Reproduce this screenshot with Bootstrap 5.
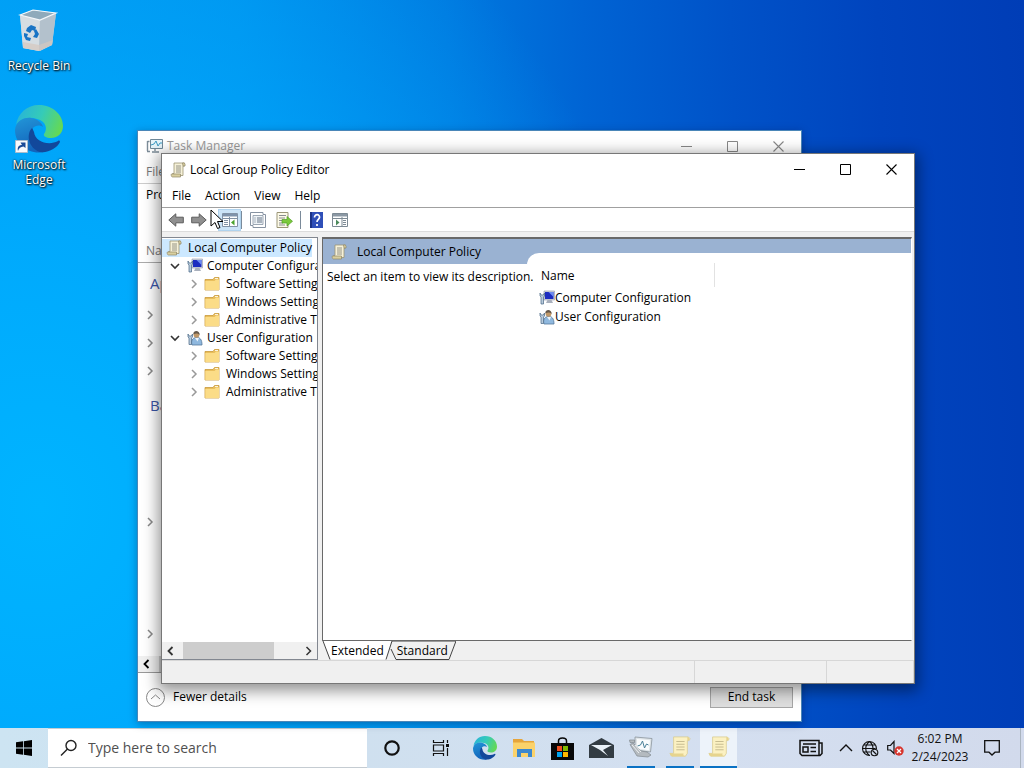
<!DOCTYPE html>
<html lang="en">
<head>
<meta charset="utf-8">
<meta name="viewport" content="width=device-width, initial-scale=1">
<title>Local Group Policy Editor</title>
<link href="https://cdn.jsdelivr.net/npm/bootstrap@5.3.0/dist/css/bootstrap.min.css" rel="stylesheet">
<style>
body{font-family:"Open Sans","Noto Sans",sans-serif;font-size:12px;line-height:18px;color:#000;overflow:hidden;
 background:radial-gradient(ellipse 62% 95% at 4% 66%,#00b4ff 0,rgba(0,172,254,.9) 35%,rgba(0,150,245,0) 100%),linear-gradient(88deg,#0098f0 0%,#0090ec 25%,#007ae0 45%,#0064d4 58%,#0052c8 72%,#0044be 86%,#003db6 100%)}
button{font:inherit;color:inherit;background:none;border:0;padding:0}
a{color:inherit;text-decoration:none}
svg{display:block;flex:none}
.desk-icon{width:78px;color:#fff;line-height:15px;text-shadow:1px 1px 2px #000,0 0 2px #000}
.win{position:absolute;background:#fff}
.taskman{left:137px;top:130px;right:222px;bottom:6px;border:1px solid #4a86b8;box-shadow:0 2px 8px rgba(0,20,60,.35)}
.gpedit{left:161px;top:153px;right:109px;bottom:44px;border:1px solid #777;box-shadow:0 4px 14px 3px rgba(0,0,0,.42)}
.capbtn{width:46px;height:29px;display:flex;align-items:center;justify-content:center}
.tm-title{height:30px;color:#999}
.tm-title .capbtn{color:#888}
.tm-menu{height:23px;color:#777;border-bottom:1px solid #ccc}
.tm-tabs{height:22px}
.tm-head{height:57px;border-bottom:1px solid #aaa;color:#777;padding-bottom:2px}
.tm-group{font-size:15px;color:#3a55a8;line-height:20px;font-weight:400;margin:0;padding:10px 0 8px 4px}
.tm-row{height:28px;color:#888}
.tm-gap{height:108px}
.tm-scroll{height:17px;background:#f0f0f0;border-bottom:1px solid #999}
.tm-thumb{background:#cdcdcd;width:300px}
.tm-foot{height:48px}
.endtask{width:83px;height:21px;background:#dedede;border:1px solid #a6a6a6;line-height:18px}
.gp-title{height:31px}
.gp-menu{height:23px;border-bottom:1px solid #a0a0a0;gap:14px;padding-left:10px}
.gp-tools{height:24px;border-bottom:1px solid #dcdcdc;padding-left:2px}
.toolbtn{width:23px;height:22px;display:flex;align-items:center;justify-content:center;flex:none}
.toolbtn.on{background:#cce4f7;border:1px solid #b0d3ee}
.toolsep{width:1px;height:18px;background:#7a8a9a}
.gp-main{background:#f0f0f0;padding:5px 2px 0 0;min-height:0}
.tree{width:156px;border:1px solid #828790;border-left:0;background:#fff;overflow:hidden}
.tree ul{list-style:none;margin:0;padding:0}
.tree>ul{padding-top:1px}
.tree li>div{height:18px;display:flex;align-items:center;white-space:nowrap}
.tree .chosen{background:#cce8ff;width:150px;gap:6px}
.tree li>.leaf{padding-left:23px}
.leaf .folder{margin:0 6px 0 2px}
.tw{width:17px;display:flex;justify-content:center;flex:none;color:#999}
.hscroll{height:17px;background:#f0f0f0;color:#333}
.hthumb{width:91px;background:#cdcdcd}
.scope{border:1px solid #696969;border-width:2px 1px 1px;border-right-color:#fff;background:#fff;min-height:0}
.blue{background:#9ab2d2}
.desc{width:204px}
.desc-head{height:25px}
.desc-head svg{margin-right:10px}
.results{padding-top:14px}
.results-in{background:#fff;border-top-left-radius:12px;padding:10px 0 0 7px}
.namecol{width:181px;height:24px;border-right:1px solid #e2e2e2;padding:4px 7px;margin-bottom:1px}
.item{height:19px;line-height:19px;padding-left:5px}
.tabstrip{height:19px}
.tab-a{padding-left:9px}
.tab-b{padding-left:13px}
.status{height:23px;background:#f0f0f0;border-top:1px solid #d7d7d7}
.status div{border-right:1px solid #d7d7d7}
.s1{width:132px}
.s2{width:87px}
.pointer{position:absolute;left:48px;top:55px}
.bar{height:40px;background:linear-gradient(90deg,#cde4f2,#cfe0ef 35%,#d4dff0 70%,#d2daec);color:#111}
.startbtn{width:48px}
.searchbox{width:319px;background:#fff;border:solid #c5ccd2;border-width:1px 0;padding-left:12px;gap:10px}
.searchbox input{border:0;background:none;font-size:14px;outline:0;padding:0;min-width:0}
.searchbox input::placeholder{color:#505050;opacity:1}
.task{width:39px;height:40px;display:flex;align-items:center;justify-content:center;flex:none}
.task.wide{width:49px}
.task.open span{border-bottom:2px solid #0a72c4;height:40px;width:28px;display:flex;align-items:center;justify-content:center}
.task.open.now span{width:37px;background:#edf3fa}
.clock{width:72px;text-align:center;font-size:12px}
.peek{width:4px;border-left:1px solid #aab4c0}
</style>
</head>
<body class="vh-100 d-flex flex-column">
<svg width="0" height="0" class="position-absolute" aria-hidden="true">
 <defs>
  <linearGradient id="gTop" x1="0" y1=".3" x2="1" y2=".6"><stop offset="0" stop-color="#28b4d8"/><stop offset=".5" stop-color="#35cbb8"/><stop offset="1" stop-color="#66d952"/></linearGradient>
  <linearGradient id="gMid" x1="0" y1="0" x2=".3" y2="1"><stop offset="0" stop-color="#2296d8"/><stop offset="1" stop-color="#1364bb"/></linearGradient>
 </defs>
 <symbol id="edge" viewBox="0 0 48 48">
  <path fill="url(#gTop)" d="M1 20C3 8 12 0 24 0c14 0 24 10 24 21 0 8-6 12-12 12-5 0-8-2-7-4 4-5 2-13-7-15C13 11 5 14 1 20z"/>
  <path fill="url(#gMid)" d="M0 25C1 16 9 12 16 13c7 1 11 5 12 9-5-4-13 0-13 9 0 9 7 15 14 16C14 50 0 40 0 25z"/>
  <path fill="#12489b" d="M17 23c-6 6-4 20 8 24 9 1 17-4 20-10 0-1-1-2-2-1-9 5-23 1-24-9-1-2-1-3-2-4z"/>
 </symbol>
 <symbol id="scroll" viewBox="0 0 16 16">
  <path d="M4 1h10.500v3H13v9.500H2.500v-2H4z" fill="#f6f1d8" stroke="#9c9474" stroke-width=".8"/>
  <path d="M12.500 1c2-.6 3 .8 2.500 3H13zM1.500 12h9v3H2.500c-1.500 0-1.500-3-1-3z" fill="#d9cf9f" stroke="#8f8768" stroke-width=".7"/>
  <path d="M6 4h5M6 6h5M6 8h5M6 10h5" stroke="#8a8a80" stroke-width=".9"/>
 </symbol>
 <symbol id="bigscroll" viewBox="0 0 24 24">
  <path d="M5 1h16l2 2-1 2h-2v14l-2 3H3l-2-3h4z" fill="#fbf1c2" stroke="#d9c98a" stroke-width=".8"/>
  <path d="M20 1c3 0 3 4 0 4zM1 19h15c-1 2 0 3 2 3H4c-3 0-3-3-3-3z" fill="#e6d48e"/>
  <path d="M8 6h9M8 9h9M8 12h9M8 15h9" stroke="#c3b88c" stroke-width="1"/>
 </symbol>
 <symbol id="folder" viewBox="0 0 16 16">
  <path d="M1 3.500h8L10.500 1.500H15V14H1z" fill="#e9be5c" stroke="#c99a3c" stroke-width=".8"/><path d="M1.300 5h9.200l1.500-1.500h3V14H1.300z" fill="#fbdc87"/><path d="M11 2.500h3" stroke="#fff" stroke-width=".8"/>
 </symbol>
 <symbol id="comp" viewBox="0 0 16 16">
  <path d="M5 1h10.500v9H5z" fill="#d4d8e0" stroke="#8d96a8" stroke-width=".6"/><path d="M6 2h8.500v7H6z" fill="#1c2cc0"/><path d="M9.500 2h5v5z" fill="#6d8cf0"/><path d="M8.500 10h4l1.500 3H7z" fill="#a9b0bd"/>
  <path d="M1 3v3l1 1v7h2.500V7l1-1V3L4.300 5H2.200z" fill="#b9cbdc" stroke="#466684" stroke-width=".7"/>
 </symbol>
 <symbol id="user" viewBox="0 0 16 16">
  <path d="M5 15c-1-4 0-7 4-7.500s6 2 6 7.500z" fill="#8fb8de" stroke="#56789c" stroke-width=".8"/><path d="M8 8l2.500 3.500L12 8" fill="#eef5fb"/><circle cx="9.500" cy="4.800" r="2.900" fill="#c09868"/><path d="M6.300 4.500C6 0 12.500-.5 12.800 5c-2-2-4-2-6.500-.5z" fill="#65584a"/>
  <path d="M1 4v3l1 1v6.500h2.500V8l1-1V4L4.300 6H2.200z" fill="#b9cbdc" stroke="#466684" stroke-width=".7"/>
 </symbol>
 <symbol id="right" viewBox="0 0 8 10"><path d="M2 1l4 4-4 4" fill="none" stroke="currentColor" stroke-width="1.500"/></symbol>
 <symbol id="left" viewBox="0 0 8 10"><path d="M6 1L2 5l4 4" fill="none" stroke="currentColor" stroke-width="1.800"/></symbol>
 <symbol id="down" viewBox="0 0 10 8"><path d="M1 2l4 4 4-4" fill="none" stroke="#333" stroke-width="1.600"/></symbol>
 <symbol id="min" viewBox="0 0 11 11"><path d="M0 5.500h11" stroke="currentColor"/></symbol>
 <symbol id="max" viewBox="0 0 11 11"><path d="M.5.5h10v10H.5z" fill="none" stroke="currentColor"/></symbol>
 <symbol id="close" viewBox="0 0 11 11"><path d="M.5.5l10 10M10.500.5l-10 10" stroke="currentColor" stroke-width="1.100"/></symbol>
 <symbol id="arrowr" viewBox="0 0 16 14"><path d="M.7 4.200h7.500V.8l7 6.200-7 6.200V9.800H.7z" fill="#909090" stroke="#5c5c5c" stroke-width="1"/></symbol>
 <symbol id="monitor" viewBox="0 0 24 22">
  <path d="M6 1l17 1.500L21.500 16 6 14z" fill="#dfe5e9" stroke="#8a949c" stroke-width=".8"/><path d="M8 3l13 1.200-1 10L8 12.500z" fill="#fafcfd"/><path d="M8.500 10l3-1 2-4 2 7 2-4 2 1" fill="none" stroke="#4a8098"/>
  <path d="M.5 4h5v2.500H1zM1 8.500L4 7l8 8 6 1 4 3-3 2-11-1z" fill="#b4babf" stroke="#82898f" stroke-width=".7"/><path d="M3 9l7 8M6 9l6 7" stroke="#eef1f3"/>
 </symbol>
 <symbol id="tmsmall" viewBox="0 0 17 16">
  <path d="M4.500 1.500h12v9h-12z" fill="#e6f4fa" stroke="#6f8898"/><path d="M5 7l3-1 2-3 2 5 2-3h2" fill="none" stroke="#3c9cc4"/><path d="M1.500 3.500h2M1.500 3v10M1 13.500h3M9 11v2M6 14h7" fill="none" stroke="#7c8c98" stroke-width="1.400"/>
 </symbol>
</svg>

<main class="flex-fill position-relative">
 <nav class="d-flex flex-column text-center pt-2" aria-label="Desktop">
  <a href="#" class="desk-icon d-flex flex-column align-items-center">
   <svg width="42" height="46" viewBox="0 0 42 46" class="mb-1">
    <path d="M2 7l13-5 23 3-4 32-12 6-17-3z" fill="#c5d3dd"/><path d="M2 7l20 5-1 31-16-3z" fill="#d6dde2"/><path d="M22 12l16-7-4 32-13 6z" fill="#b3c1cc"/><path d="M2 7l13-5 23 3-16 7z" fill="#8faabb" stroke="#f4f8fb" stroke-width="1.200"/><path d="M5 34l16 3 14-5-1 5-13 6-16-3z" fill="#d5c8bf" opacity=".7"/>
    <g fill="#1874c5"><path d="M9 20l4-3 5 2-1 4-3-1-2 3-4-2z"/><path d="M18 21l3 5-2 4-4-1 2-3-1-3z"/><path d="M6 25l4 1-1 3 4 1-1 3-4-1-2-4z"/></g>
   </svg>
   <span>Recycle Bin</span>
  </a>
  <a href="#" class="desk-icon d-flex flex-column align-items-center mt-4 pt-2">
   <span class="position-relative mb-1">
    <svg width="48" height="48"><use href="#edge"/></svg>
    <svg width="13" height="13" viewBox="0 0 13 13" class="position-absolute start-0 bottom-0"><path fill="#f8fafc" stroke="#aabccc" d="M.5.5h12v12H.5z"/><path d="M3 11c-1-4 1-6 4-6L5.500 2.500h5v5.500L8.500 6.500C5.500 7 4 8 3 11z" fill="#1a4a96"/></svg>
   </span>
   <span>Microsoft<br>Edge</span>
  </a>
 </nav>

 <section class="win taskman d-flex flex-column" aria-label="Task Manager">
  <header class="tm-title d-flex align-items-center">
   <svg width="17" height="16" class="ms-2"><use href="#tmsmall"/></svg>
   <span class="ps-1 flex-fill">Task Manager</span>
   <button class="capbtn" aria-label="Minimize"><svg width="11" height="11"><use href="#min"/></svg></button>
   <button class="capbtn" aria-label="Maximize"><svg width="11" height="11"><use href="#max"/></svg></button>
   <button class="capbtn" aria-label="Close"><svg width="11" height="11"><use href="#close"/></svg></button>
  </header>
  <div class="tm-menu d-flex ps-2"><button>File</button></div>
  <div class="tm-tabs d-flex ps-2"><button>Processes</button></div>
  <div class="tm-head d-flex align-items-end ps-2">Name</div>
  <div class="flex-fill overflow-hidden ps-2">
   <h2 class="tm-group">Apps</h2>
   <div class="tm-row d-flex align-items-center"><svg width="8" height="10"><use href="#right"/></svg></div>
   <div class="tm-row d-flex align-items-center"><svg width="8" height="10"><use href="#right"/></svg></div>
   <div class="tm-row d-flex align-items-center"><svg width="8" height="10"><use href="#right"/></svg></div>
   <h2 class="tm-group">Background processes</h2>
   <div class="tm-row tm-gap d-flex align-items-end pb-1"><svg width="8" height="10"><use href="#right"/></svg></div>
   <div class="tm-row tm-gap d-flex align-items-end"><svg width="8" height="10"><use href="#right"/></svg></div>
  </div>
  <div class="tm-scroll d-flex"><span class="d-flex align-items-center px-1 me-1"><svg width="9" height="10"><use href="#left"/></svg></span><span class="tm-thumb"></span></div>
  <footer class="tm-foot d-flex align-items-center justify-content-between px-2">
   <button class="d-flex align-items-center"><svg width="19" height="19" viewBox="0 0 19 19" fill="none" stroke="#888"><circle cx="9.500" cy="9.500" r="9"/><path d="M5 11l4.500-4 4.500 4"/></svg><span class="ps-2">Fewer details</span></button>
   <button class="endtask">End task</button>
  </footer>
 </section>

 <section class="win gpedit d-flex flex-column" aria-label="Local Group Policy Editor">
  <header class="gp-title d-flex align-items-center">
   <svg width="16" height="16" class="ms-2"><use href="#scroll"/></svg>
   <span class="ps-1 flex-fill">Local Group Policy Editor</span>
   <button class="capbtn" aria-label="Minimize"><svg width="11" height="11"><use href="#min"/></svg></button>
   <button class="capbtn" aria-label="Maximize"><svg width="11" height="11"><use href="#max"/></svg></button>
   <button class="capbtn" aria-label="Close"><svg width="11" height="11"><use href="#close"/></svg></button>
  </header>
  <nav class="gp-menu d-flex align-items-center"><button>File</button><button>Action</button><button>View</button><button>Help</button></nav>
  <div class="gp-tools d-flex align-items-center">
   <button class="toolbtn" aria-label="Back"><svg width="16" height="14" viewBox="0 0 16 14"><path d="M15.300 4.200H7.800V.8L.8 7l7 6.200V9.800h7.500z" fill="#909090" stroke="#5c5c5c"/></svg></button>
   <button class="toolbtn" aria-label="Forward"><svg width="16" height="14"><use href="#arrowr"/></svg></button>
   <button class="toolbtn on ms-2" aria-label="Show console tree"><svg width="16" height="14" viewBox="0 0 16 14"><path d="M.5.5h15v13H.5z" fill="#fff" stroke="#8292a5"/><path d="M1 1h14v2.500H1z" fill="#7f93ab"/><path d="M7.500 4v9M1 5.500h14M2 7.500h4M2 9.500h4M2 11.500h4" stroke="#8292a5"/><path d="M12.500 6.500v6L9 9.500z" fill="#4aa32c"/></svg></button>
   <span class="toolsep"></span>
   <button class="toolbtn ms-1" aria-label="Properties"><svg width="16" height="16" viewBox="0 0 16 16"><path d="M.5.5h12.500v2h2.500v13H3v-2H.5z" fill="#fff" stroke="#8793a2"/><path d="M3 3.500h10v9H3z" fill="#edf2f6" stroke="#8793a2" stroke-width=".8"/><path d="M4.500 6h1M7 6h5M4.500 8h1M7 8h5M4.500 10h1M7 10h5" stroke="#687787"/></svg></button>
   <button class="toolbtn ms-1" aria-label="Export list"><svg width="17" height="16" viewBox="0 0 17 16"><path d="M1 .5h11v15H1z" fill="#fdfae8" stroke="#9b9678"/><path d="M3 3.500h7M3 6h6M3 8.500h4M3 11h4M3 13h6" stroke="#8a8c90"/><path d="M6 7.500h5V4.500l5.500 4.800L11 14v-3H6z" fill="#7cc93d" stroke="#4f9d22" stroke-width=".7"/></svg></button>
   <span class="toolsep ms-1"></span>
   <button class="toolbtn ms-1" aria-label="Help"><svg width="13" height="16" viewBox="0 0 13 16"><path d="M0 0h13v16H0z" fill="#2f4fb8"/><path d="M0 0h2v16H0z" fill="#1b3286"/><path d="M4.500 5.500c0-4 5.500-3.500 5 0-.3 1.800-2.500 2-2.500 4.500M7 12v2" fill="none" stroke="#fff" stroke-width="1.700"/></svg></button>
   <button class="toolbtn" aria-label="Show action pane"><svg width="16" height="14" viewBox="0 0 16 14"><path d="M.5.5h15v13H.5z" fill="#fff" stroke="#7d8a94"/><path d="M1 1h14v2.500H1z" fill="#8b98a4"/><path d="M10 4v9M1 5.500h14M11 7.500h3M11 9.500h3M11 11.500h3" stroke="#7d8a94"/><path d="M4 6.500v6l3.500-3z" fill="#4c8a5c"/></svg></button>
  </div>
  <div class="gp-main flex-fill d-flex">
   <div class="tree d-flex flex-column">
    <ul class="flex-fill">
     <li><div class="chosen"><svg width="16" height="16" class="ms-1"><use href="#scroll"/></svg>Local Computer Policy</div></li>
     <li><div><span class="tw ms-1"><svg width="10" height="8"><use href="#down"/></svg></span><svg width="16" height="16" class="ms-1 me-1"><use href="#comp"/></svg>Computer Configuration</div>
      <ul>
       <li><div class="leaf"><span class="tw"><svg width="8" height="10"><use href="#right"/></svg></span><svg width="16" height="16" class="folder"><use href="#folder"/></svg>Software Settings</div></li>
       <li><div class="leaf"><span class="tw"><svg width="8" height="10"><use href="#right"/></svg></span><svg width="16" height="16" class="folder"><use href="#folder"/></svg>Windows Settings</div></li>
       <li><div class="leaf"><span class="tw"><svg width="8" height="10"><use href="#right"/></svg></span><svg width="16" height="16" class="folder"><use href="#folder"/></svg>Administrative Templates</div></li>
      </ul></li>
     <li><div><span class="tw ms-1"><svg width="10" height="8"><use href="#down"/></svg></span><svg width="16" height="16" class="ms-1 me-1"><use href="#user"/></svg>User Configuration</div>
      <ul>
       <li><div class="leaf"><span class="tw"><svg width="8" height="10"><use href="#right"/></svg></span><svg width="16" height="16" class="folder"><use href="#folder"/></svg>Software Settings</div></li>
       <li><div class="leaf"><span class="tw"><svg width="8" height="10"><use href="#right"/></svg></span><svg width="16" height="16" class="folder"><use href="#folder"/></svg>Windows Settings</div></li>
       <li><div class="leaf"><span class="tw"><svg width="8" height="10"><use href="#right"/></svg></span><svg width="16" height="16" class="folder"><use href="#folder"/></svg>Administrative Templates</div></li>
      </ul></li>
    </ul>
    <div class="hscroll d-flex"><span class="d-flex align-items-center px-1 me-1"><svg width="9" height="10"><use href="#left"/></svg></span><span class="hthumb"></span><span class="d-flex align-items-center ms-auto me-1"><svg width="9" height="10"><use href="#right"/></svg></span></div>
   </div>
   <div class="flex-fill d-flex flex-column ms-1">
    <div class="scope flex-fill d-flex">
     <div class="desc position-relative z-1">
      <div class="desc-head blue d-flex align-items-center"><svg width="16" height="16" class="ms-2"><use href="#scroll"/></svg>Local Computer Policy</div>
      <p class="m-0 pt-1 ps-1 text-nowrap">Select an item to view its description.</p>
     </div>
     <div class="results blue flex-fill d-flex">
      <div class="results-in flex-fill">
       <div class="namecol">Name</div>
       <div class="item d-flex align-items-center"><svg width="16" height="16"><use href="#comp"/></svg>Computer Configuration</div>
       <div class="item d-flex align-items-center"><svg width="16" height="16"><use href="#user"/></svg>User Configuration</div>
      </div>
     </div>
    </div>
    <div class="tabstrip position-relative d-flex">
     <svg width="134" height="19" viewBox="0 0 134 19" class="position-absolute start-0 top-0"><path d="M0 0l9 18h55l5-18z" fill="#fff"/><path d="M1 0l7 18.500M64 18.500L70 0h64l-7 18.500H74L69 8" fill="none" stroke="#444"/></svg>
     <button class="position-relative tab-a">Extended</button><button class="position-relative tab-b">Standard</button>
    </div>
   </div>
  </div>
  <div class="status d-flex"><div class="flex-fill"></div><div class="s1"></div><div class="s2"></div></div>
  <svg class="pointer" width="14" height="21" viewBox="0 0 14 21"><path d="M1 1v16l4-3.500 2.500 6 2.500-1-2.500-6H13z" fill="#fff" stroke="#000"/></svg>
 </section>
</main>

<footer class="bar d-flex align-items-stretch">
 <button class="startbtn d-flex align-items-center justify-content-center" aria-label="Start"><svg width="16" height="16" viewBox="0 0 16 16"><path d="M0 2.300L7 1.300V7.600H0zM7.800 1.200L16 0v7.600H7.800zM0 8.400h7v6.300l-7-1zM7.800 8.400H16V16l-8.200-1.200z"/></svg></button>
 <label class="searchbox d-flex align-items-center"><svg width="18" height="18" viewBox="0 0 18 18" fill="none" stroke="#222" stroke-width="1.400"><circle cx="11" cy="6.500" r="5"/><path d="M7.500 10L1 16.500"/></svg><input type="text" class="flex-fill" placeholder="Type here to search" aria-label="Search"></label>
 <button class="task wide" aria-label="Cortana"><svg width="16" height="16" viewBox="0 0 16 16"><circle cx="8" cy="8" r="6.700" fill="none" stroke="#111" stroke-width="2.200"/></svg></button>
 <button class="task wide" aria-label="Task view"><svg width="18" height="16" viewBox="0 0 18 16" fill="none" stroke="#111" stroke-width="1.200"><path d="M1.500 0v2.500h10V0M1.500 16v-2.500h10V16M1.500 5h10v6h-10zM15.500 0v3M15.500 8v8"/><path d="M14 4h3v3h-3z" fill="#111" stroke="none"/></svg></button>
 <button class="task" aria-label="Microsoft Edge"><svg width="24" height="24"><use href="#edge"/></svg></button>
 <button class="task" aria-label="File Explorer"><svg width="22" height="20" viewBox="0 0 22 20"><path d="M0 1h9l2 2h10v15H0z" fill="#e6a53b"/><path d="M0 4.500h22V19H0z" fill="#fbd26a"/><path d="M4 19v-8h15v8h-4v-4H8v4z" fill="#3c88cf"/></svg></button>
 <button class="task" aria-label="Microsoft Store"><svg width="23" height="23" viewBox="0 0 23 23"><path d="M0 6h23v17H0z" fill="#080808"/><path d="M7.500 8V4c0-4 8-4 8 0v4" fill="none" stroke="#080808" stroke-width="1.500"/><path d="M6 9h5v5H6z" fill="#f05022"/><path d="M12 9h5v5h-5z" fill="#7fba00"/><path d="M6 15h5v5H6z" fill="#00a4ef"/><path d="M12 15h5v5h-5z" fill="#ffb900"/></svg></button>
 <button class="task" aria-label="Mail"><svg width="25" height="20" viewBox="0 0 25 20"><path d="M0 7l12.500-7L25 7v13H0z" fill="#333c43"/><path d="M2 7h21l-9 5 5 6-8-6z" fill="#e9f1f8"/></svg></button>
 <button class="task open" aria-label="Task Manager"><span><svg width="24" height="22"><use href="#monitor"/></svg></span></button>
 <button class="task open" aria-label="Local Group Policy"><span><svg width="22" height="24"><use href="#bigscroll"/></svg></span></button>
 <button class="task open now" aria-label="Local Group Policy Editor"><span><svg width="22" height="24"><use href="#bigscroll"/></svg></span></button>
 <div class="ms-auto d-flex align-items-center">
  <button aria-label="News"><svg width="24" height="18" viewBox="0 0 24 18" fill="none" stroke="#111" stroke-width="1.500"><path d="M1 1.500h19v15H3l-2-2zM20 4h3v10.500l-2 2h-3M4 5h13M4 8h5v5H4zM11.500 8.500H17M11.500 12.500H17"/></svg></button>
  <button class="ms-3" aria-label="Show hidden icons"><svg width="14" height="10" viewBox="0 0 14 10" fill="none" stroke="#111" stroke-width="1.400"><path d="M1 8l6-6 6 6"/></svg></button>
  <button class="ms-2" aria-label="Network"><svg width="18" height="17" viewBox="0 0 18 17" fill="none" stroke="#111" stroke-width="1.100"><path d="M15.500 9A7 7 0 1 0 9 15.500M8.500 1.500c-5 4-5 10 0 14M8.500 1.500c2.500 2 3.500 4 3.500 7M1.500 8.500h13M2.500 5h12M2.500 12h7"/><circle cx="13.500" cy="12.500" r="3.300"/><path d="M11.500 10.500l4 4"/></svg></button>
  <button class="ms-2" aria-label="Volume"><svg width="17" height="16" viewBox="0 0 17 16"><path d="M.7 5.500h2.800L7 1.500v12L3.500 10H.7z" fill="none" stroke="#111" stroke-width="1.200"/><circle cx="12" cy="11" r="4.700" fill="#d7362f"/><path d="M10 9l4 4M14 9l-4 4" stroke="#fff" stroke-width="1.300"/></svg></button>
  <button class="clock">6:02 PM<br>2/24/2023</button>
  <button class="ms-2 me-3" aria-label="Notifications"><svg width="16" height="16" viewBox="0 0 16 16" fill="none" stroke="#111" stroke-width="1.300"><path d="M.7.7h14.600v11.500H11L8 15l-3-2.800H.7z"/></svg></button>
  <span class="peek align-self-stretch ms-1"></span>
 </div>
</footer>
<script src="https://cdn.jsdelivr.net/npm/bootstrap@5.3.0/dist/js/bootstrap.bundle.min.js"></script>
</body>
</html>
